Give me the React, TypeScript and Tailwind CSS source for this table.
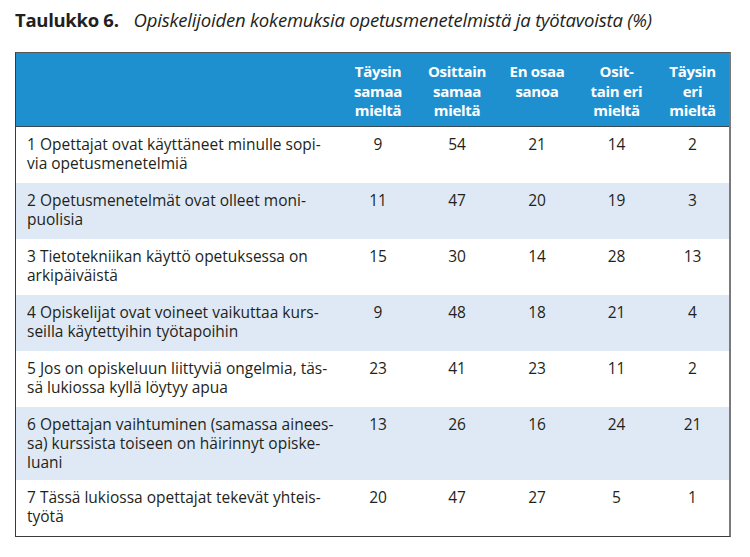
import React from "react";

const rows: { label: string[]; v: number[] }[] = [
  { label: ["1 Opettajat ovat käyttäneet minulle sopi-", "via opetusmenetelmiä"], v: [9, 54, 21, 14, 2] },
  { label: ["2 Opetusmenetelmät ovat olleet moni-", "puolisia"], v: [11, 47, 20, 19, 3] },
  { label: ["3 Tietotekniikan käyttö opetuksessa on", "arkipäiväistä"], v: [15, 30, 14, 28, 13] },
  { label: ["4 Opiskelijat ovat voineet vaikuttaa kurs-", "seilla käytettyihin työtapoihin"], v: [9, 48, 18, 21, 4] },
  { label: ["5 Jos on opiskeluun liittyviä ongelmia, täs-", "sä lukiossa kyllä löytyy apua"], v: [23, 41, 23, 11, 2] },
  {
    label: ["6 Opettajan vaihtuminen (samassa ainees-", "sa) kurssista toiseen on häirinnyt opiske-", "luani"],
    v: [13, 26, 16, 24, 21],
  },
  { label: ["7 Tässä lukiossa opettajat tekevät yhteis-", "työtä"], v: [20, 47, 27, 5, 1] },
];

const headers: string[][] = [
  ["Täysin", "samaa", "mieltä"],
  ["Osittain", "samaa", "mieltä"],
  ["En osaa", "sanoa"],
  ["Osit-", "tain eri", "mieltä"],
  ["Täysin", "eri", "mieltä"],
];

const cols = "grid grid-cols-[323px_78px_80px_80px_79px_73px]";

export default function App() {
  return (
    <div className="w-[750px] h-[557px] bg-white text-[#231f20]" style={{ fontFamily: "'Open Sans', Lato, sans-serif" }}>
      <div className="pl-[15px] pt-[6px] h-[52px] flex items-start">
        <span className="font-bold text-[18.5px] leading-[27px] tracking-[-0.3px]">Taulukko 6.</span>
        <span className="italic text-[18.5px] leading-[27px] ml-[15px] tracking-[-0.2px]">
          Opiskelijoiden kokemuksia opetusmenetelmistä ja työtavoista (%)
        </span>
      </div>
      <div className="ml-[15px] w-[716px] border-l border-t border-b border-l-[#3a3a3a] border-t-[#555] border-b-[#3a3a3a] border-r-2 border-r-[#7a7a7a]">
        <div className={`${cols} bg-[#1f90cf] h-[74px] border-b border-b-[#3a4a55]`}>
          <div />
          {headers.map((h, i) => (
            <div key={i} className="pt-[9px] text-center text-white font-bold text-[15px] leading-[19.5px] tracking-[-0.3px]">
              {h.map((l, j) => (
                <div key={j}>{l}</div>
              ))}
            </div>
          ))}
        </div>
        {rows.map((r, i) => (
          <div
            key={i}
            className={`${cols} ${i % 2 === 1 ? "bg-[#dfe9f5]" : "bg-white"} ${r.label.length === 3 ? "h-[73px]" : "h-[56px]"} ${i === rows.length - 1 ? "h-[54px]" : ""}`}
          >
            <div className="pl-[11px] pt-[8px] text-[15.5px] leading-[19px]">
              {r.label.map((l, j) => (
                <div key={j} className="whitespace-nowrap">{l}</div>
              ))}
            </div>
            {r.v.map((n, j) => (
              <div key={j} className="pt-[8px] text-center text-[15.5px] leading-[19px]">
                {n}
              </div>
            ))}
          </div>
        ))}
      </div>
    </div>
  );
}
